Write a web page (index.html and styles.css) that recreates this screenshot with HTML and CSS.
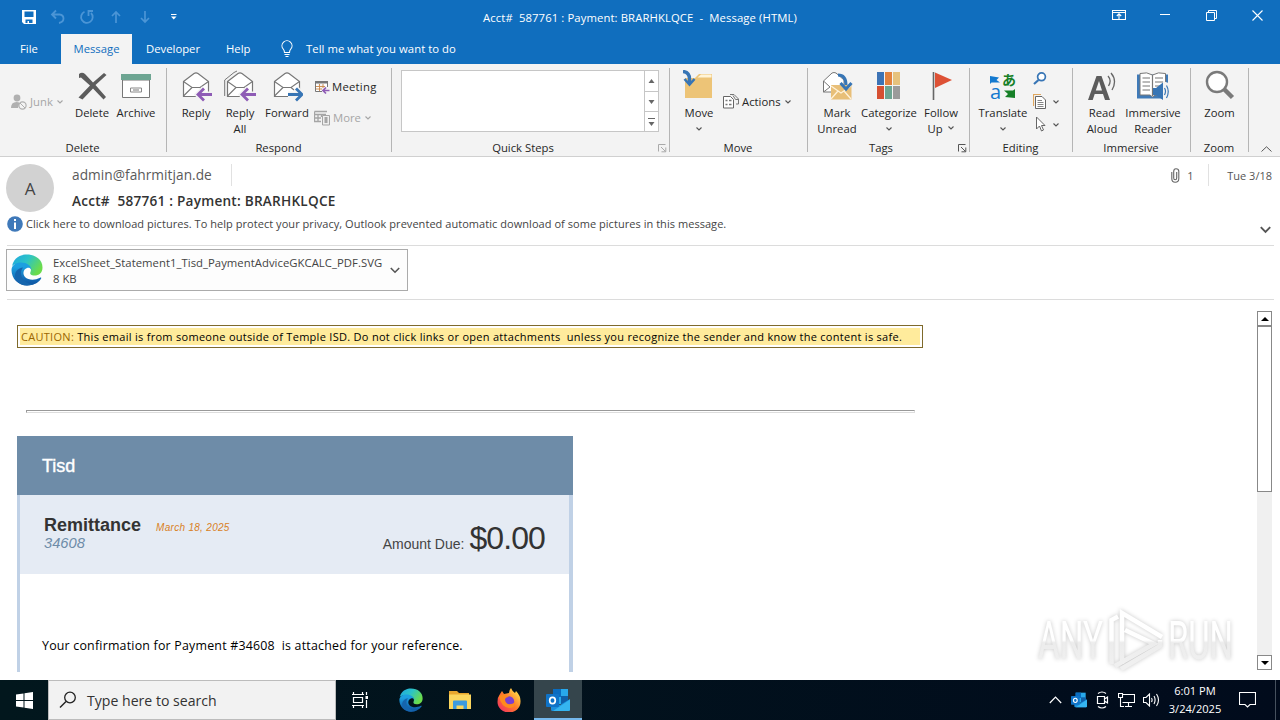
FILE: index.html
```
<!DOCTYPE html>
<html lang="en">
<head>
<meta charset="UTF-8" />
<title>Acct# 587761 : Payment: BRARHKLQCE - Message (HTML)</title>
<link rel="stylesheet" href="styles.css">
</head>
<body>

<svg class="defs" width="0" height="0">
  <symbol id="chev" viewBox="0 0 8 6"><path d="M1.500 1.500L4 4L6.500 1.500" fill="none" stroke="currentColor" stroke-width="1.100"/></symbol>
  <symbol id="envelope" viewBox="0 0 32 32">
    <path d="M3.500 11.500L14 3.500Q16 2.200 18 3.500L28.500 11.500V26.500H3.500Z" fill="#fff" stroke="#777" stroke-width="1.200"/>
    <path d="M3.500 11.500L12 17.500H20L28.500 11.500M12 17.500L3.500 26M20 17.500L23 20" fill="none" stroke="#777" stroke-width="1.100"/>
  </symbol>
  <symbol id="launcher" viewBox="0 0 9 9"><path d="M.5 7.500V.5H7.500M3 3L7.500 7.500M7.800 3.500V7.800H3.500" fill="none" stroke="currentColor"/></symbol>
  <symbol id="edge" viewBox="0 0 32 32">
    <path d="M1 12C3 4 9 .5 16 .5C25 .5 31.500 6 31.500 13.500C31.500 19 28 21.500 23.500 21.500C20 21.500 18.500 20 19.500 18C21 15 19 11 14 10.500C9 9 3 10 1 12Z" fill="url(#edgeGreen)"/>
    <path d="M.5 16C.5 11 5 8.500 10 8.500C16 8.500 20.500 12 20.500 16C19.500 13.800 17.500 13.500 16 14C12 15.500 11.500 20 14 23C17.500 26.500 24 26.500 29 23.800C30.200 23.200 30.600 24 30 24.800C27 29.500 22 31.500 16 31.500C7 31.500 .5 24.500 .5 16Z" fill="url(#edgeBlue)"/>
    <path d="M12 13.500C8 18 10 27 18 29.500C21 30.300 24 29.500 26 28.500C23 30.600 19.500 31.500 16 31.500C9 31.500 4 27 4 21C4.500 16.500 8 14 12 13.500Z" fill="#1565ad"/>
  </symbol>
  <symbol id="outlook" viewBox="0 0 24 24">
    <rect x="7" y="1" width="15" height="15" fill="#28a8ea"/>
    <rect x="7" y="1" width="8" height="8" fill="#0a6cbf"/>
    <rect x="15" y="8" width="7" height="8" fill="#0f5fa8"/>
    <path d="M5 12L14 17L24 11V21.500Q24 23 22.500 23H6.500Q5 23 5 21.500Z" fill="#1b8fdc"/>
    <path d="M24 11.500L7 23H22.500Q24 23 24 21.500Z" fill="#35b5f0"/>
    <rect x="0" y="6" width="13" height="13" rx="1" fill="#0f73c7"/>
    <ellipse cx="6.500" cy="12.500" rx="2.800" ry="3.200" fill="none" stroke="#fff" stroke-width="1.700"/>
  </symbol>
  <linearGradient id="edgeBlue" x1="0" y1="0" x2="0" y2="1"><stop offset=".2" stop-color="#1c9fe0"/><stop offset="1" stop-color="#0e4f9e"/></linearGradient>
  <linearGradient id="edgeGreen" x1="0" y1="0" x2="1" y2=".5"><stop offset="0" stop-color="#1fa6e0"/><stop offset=".5" stop-color="#2bc3c8"/><stop offset="1" stop-color="#6bdc4b"/></linearGradient>
  <linearGradient id="wmFade" gradientUnits="userSpaceOnUse" x1="0" y1="18" x2="0" y2="60"><stop offset=".48" stop-color="#fff"/><stop offset=".54" stop-color="#ececec"/><stop offset="1" stop-color="#f0f0f0"/></linearGradient>
</svg>

<div class="window">

  <header class="titlebar">
    <div class="quick-access">
      <svg width="16" height="16" viewBox="0 0 16 16"><path d="M1 1H15V15H3L1 13Z" fill="#fff"/><path d="M3.500 2.500H12.500V8H3.500ZM4.500 10.500H11.500V14H8V12H6.500V14H4.500Z" fill="#106ebe"/></svg>
      <svg class="faded" width="16" height="16" viewBox="0 0 16 16"><path d="M6 1.500L2 5.500L6 9.500M2 5.500H9.500Q13.500 6 13.500 9.500Q13.500 13 9 14" fill="none" stroke="currentColor" stroke-width="1.800"/></svg>
      <svg class="faded" width="16" height="16" viewBox="0 0 16 16"><path d="M5.500 2.800A5.800 5.800 0 1 0 12 4M14 2H9.500V7" fill="none" stroke="currentColor" stroke-width="1.800"/></svg>
      <svg class="faded" width="16" height="16" viewBox="0 0 16 16"><path d="M8 14V3M4 7L8 3L12 7" fill="none" stroke="currentColor" stroke-width="1.700"/></svg>
      <svg class="faded" width="16" height="16" viewBox="0 0 16 16"><path d="M8 2V13M4 9L8 13L12 9" fill="none" stroke="currentColor" stroke-width="1.700"/></svg>
      <svg width="16" height="16" viewBox="0 0 16 16"><path d="M5 5.500H10.500" stroke="#fff"/><path d="M5 7.500H10.500L7.750 10.500Z" fill="#fff"/></svg>
    </div>
    <div class="window-title">Acct#&nbsp; 587761 : Payment: BRARHKLQCE&nbsp; -&nbsp; Message (HTML)</div>
    <div class="window-controls">
      <span><svg width="14" height="12" viewBox="0 0 14 12"><path d="M.5 1.500H13.500V10.500H.5ZM.5 3.500H13.500M7 10V5M4.800 7L7 4.800L9.200 7" fill="none" stroke="#fff" stroke-width="1.100"/></svg></span>
      <span><svg width="11" height="11" viewBox="0 0 11 11"><path d="M0 4.500H10" stroke="#fff"/></svg></span>
      <span><svg width="11" height="11" viewBox="0 0 11 11"><path d="M.5 2.500H8.500V10.500H.5ZM2.500 2.500V.5H10.500V8.500H8.500" fill="none" stroke="#fff"/></svg></span>
      <span><svg width="11" height="11" viewBox="0 0 11 11"><path d="M.5.5L10.500 10.500M10.500.5L.5 10.500" stroke="#fff" stroke-width="1.100"/></svg></span>
    </div>
  </header>

  <nav class="tabs">
    <a class="tab file">File</a>
    <a class="tab active">Message</a>
    <a class="tab developer">Developer</a>
    <a class="tab help">Help</a>
    <svg class="bulb" width="12" height="18" viewBox="0 0 12 18"><path d="M3.500 12.500Q3.500 10.500 2.200 9A5 5 0 1 1 9.800 9Q8.500 10.500 8.500 12.500ZM3.500 14.500H8.500M4.500 16.500H7.500" fill="none" stroke="#fff" stroke-width="1.100"/></svg>
    <span class="tell-me">Tell me what you want to do</span>
  </nav>

  <section class="ribbon">
    <div class="group g-delete">
      <div class="tools">
        <div class="small-col junk-col">
          <div class="small disabled"><svg width="16" height="16" viewBox="0 0 16 16"><circle cx="6" cy="4" r="3.400" fill="#b0b0b0"/><path d="M0 14Q0 8 5.500 8Q8 8 8.500 9L7 14Z" fill="#b0b0b0"/><circle cx="11.500" cy="11.500" r="3.600" fill="#f3f3f3" stroke="#b0b0b0" stroke-width="1.200"/><path d="M9 9L14 14" stroke="#b0b0b0"/></svg><span>Junk</span><svg class="chev" width="8" height="6"><use href="#chev"/></svg></div>
        </div>
        <div class="big w40"><svg width="32" height="32" viewBox="0 0 32 32"><path d="M3 4Q6 1.500 9 4L17 12.500L28 3L30.500 5L19.500 15L30 27L27.500 29.500L17 18.500L6.500 29.500L2.500 27.500L14 15.500L5 7.500L3 8Z" fill="#5c5c5c"/></svg><span>Delete</span></div>
        <div class="big w48"><svg width="32" height="32" viewBox="0 0 32 32"><path d="M2.500 10H29.500V27.500H2.500Z" fill="#fff" stroke="#777"/><path d="M1 4H31V10H1Z" fill="#6da592"/><path d="M10.500 18H21.500V22H10.500Z" fill="#fff" stroke="#888"/><path d="M13 20H19" stroke="#777"/></svg><span>Archive</span></div>
      </div>
      <div class="group-name">Delete</div>
    </div>

    <div class="group g-respond">
      <div class="tools">
        <div class="big w44"><svg width="32" height="32" viewBox="0 0 32 32"><use href="#envelope" width="32" height="32"/><path d="M32 24.500H19M24 18.500L18 24.500L24 30.500" fill="none" stroke="#f3f3f3" stroke-width="6"/><path d="M32 24.500H18M24 18.500L18 24.500L24 30.500" fill="none" stroke="#8e5bb5" stroke-width="2.800"/></svg><span>Reply</span></div>
        <div class="big w44"><svg width="32" height="32" viewBox="0 0 32 32"><path d="M.7 26V10L10 2.500L13 1" fill="none" stroke="#777"/><use href="#envelope" width="32" height="32"/><path d="M32 24.500H19M24 18.500L18 24.500L24 30.500" fill="none" stroke="#f3f3f3" stroke-width="6"/><path d="M32 24.500H18M24 18.500L18 24.500L24 30.500" fill="none" stroke="#8e5bb5" stroke-width="2.800"/></svg><span>Reply<br>All</span></div>
        <div class="big w50"><svg width="32" height="32" viewBox="0 0 32 32"><use href="#envelope" width="32" height="32"/><path d="M17 24.500H30M25 18.500L31 24.500L25 30.500" fill="none" stroke="#f3f3f3" stroke-width="6"/><path d="M17 24.500H31M25 18.500L31 24.500L25 30.500" fill="none" stroke="#3775b5" stroke-width="2.800"/></svg><span>Forward</span></div>
        <div class="small-col respond-col">
          <div class="small"><svg width="16" height="16" viewBox="0 0 16 16"><path d="M1.500 2.500H13.500V8M1.500 2.500V12.500H8" fill="#fff" stroke="#777"/><path d="M1 2H14V4.500H1Z" fill="#777"/><path d="M5.500 5V12M9 5V9M2 7.500H11M2 10H8" stroke="#c98748" stroke-width=".9"/><path d="M15.500 11.500H9.500M12 8.500L9 11.500L12 14.500" fill="none" stroke="#8e5bb5" stroke-width="1.700"/></svg><span class="meeting">Meeting</span></div>
          <div class="small disabled"><svg width="16" height="16" viewBox="0 0 16 16"><path d="M.5 1.500H13M.5 1.500V11.500H7M.5 4.500H12M4 4V11M7.500 4V7M1 8H7" fill="none" stroke="#a5a5a5" stroke-width="1.300"/><path d="M8.500 5.500H15.500V15H8.500Z" fill="#eee" stroke="#a5a5a5"/><path d="M10.500 7H13.500V13H10.500Z" fill="#a5a5a5"/></svg><span>More</span><svg class="chev" width="8" height="6"><use href="#chev"/></svg></div>
        </div>
      </div>
      <div class="group-name">Respond</div>
    </div>

    <div class="group g-quick">
      <div class="tools">
        <div class="gallery">
          <div class="gallery-list"></div>
          <div class="gallery-scroll">
            <span><svg width="7" height="4"><path d="M.5 4L3.500 0L6.500 4Z" fill="#666"/></svg></span>
            <span><svg width="7" height="4"><path d="M.5 0L3.500 4L6.500 0Z" fill="#666"/></svg></span>
            <span><svg width="7" height="8"><path d="M0 .5H7" stroke="#666"/><path d="M.5 4L3.500 8L6.500 4Z" fill="#666"/></svg></span>
          </div>
        </div>
      </div>
      <div class="group-name"><span>Quick Steps</span><svg class="launcher light" width="9" height="9"><use href="#launcher"/></svg></div>
    </div>

    <div class="group g-move">
      <div class="tools">
        <div class="big w44"><svg width="32" height="32" viewBox="0 0 32 32"><path d="M2 8H12L16 4H29V28H2Z" fill="#edc477"/><path d="M14.500 7.500L18 4.500H28.500V7.500Z" fill="#fff4d8"/><path d="M0 1.500Q6.500 2 6.500 9V13" fill="none" stroke="#3775b5" stroke-width="3.400"/><path d="M1.500 9L6.500 14.500L11.500 9" fill="none" stroke="#3775b5" stroke-width="2.600"/></svg><span>Move<br><svg class="chev" width="8" height="6"><use href="#chev"/></svg></span></div>
        <div class="small-col move-col">
          <div class="small"><svg width="16" height="16" viewBox="0 0 16 16"><path d="M.5 2.500H7.500L10.500 5.500V14H.5Z" fill="#fff" stroke="#666"/><path d="M2.500 6.500H4.500M2.500 10.500H4.500M6 6.500H8.500M6 10.500H8.500" stroke="#777" stroke-width="1.400"/><path d="M7 .5H11L15.500 5V10H13M10 1.500L12.500 5.500H15" fill="none" stroke="#777"/></svg><span>Actions</span><svg class="chev" width="8" height="6"><use href="#chev"/></svg></div>
        </div>
      </div>
      <div class="group-name">Move</div>
    </div>

    <div class="group g-tags">
      <div class="tools">
        <div class="big w46"><svg width="32" height="32" viewBox="0 0 32 32"><path d="M2.500 11L11 3Q13 2 15 3L23 10V22H2.500Z" fill="#fff" stroke="#777"/><path d="M2.500 11L9 17M2.500 22L9 17" stroke="#777"/><path d="M10 15H30.500V29.500H10Z" fill="#e8bf78"/><path d="M10 16L20 23L30 16M10 29L17 21M30 29L23 21" fill="none" stroke="#fff2d9" stroke-width="1.300"/><path d="M17 5Q25 5 25 15M19.500 13L25 19L30.500 13" fill="none" stroke="#3775b5" stroke-width="3"/></svg><span>Mark<br>Unread</span></div>
        <div class="big w58"><svg width="32" height="32" viewBox="0 0 32 32"><path d="M4 2H11V15H4Z" fill="#3c73b5"/><path d="M12 2H19V15H12Z" fill="#e2823e"/><path d="M20 2H27V15H20Z" fill="#e6c27d"/><path d="M4 16H11V29H4Z" fill="#d65032"/><path d="M12 16H19V29H12Z" fill="#6da592"/><path d="M20 16H27V29H20Z" fill="#9b9b9b"/></svg><span>Categorize<br><svg class="chev" width="8" height="6"><use href="#chev"/></svg></span></div>
        <div class="big w46"><svg width="32" height="32" viewBox="0 0 32 32"><path d="M8.500 2V30" stroke="#666" stroke-width="1.600"/><path d="M10 2.500L27 10L10 18Z" fill="#dd5135"/></svg><span>Follow<br>Up <svg class="chev up" width="8" height="6"><use href="#chev"/></svg></span></div>
      </div>
      <div class="group-name"><span>Tags</span><svg class="launcher" width="9" height="9"><use href="#launcher"/></svg></div>
    </div>

    <div class="group g-editing">
      <div class="tools">
        <div class="big w50"><svg class="translate" width="32" height="32" viewBox="0 0 32 32"><path d="M3 6L12 7.500L9.500 10L13 12.500H4.500L3 14Z" fill="#1379cf"/><path d="M28 28L18 27L21 24L17 20.500H26L28 19Z" fill="#168028"/><text x="15" y="15" class="kana">あ</text><text x="3" y="29" class="latin">a</text></svg><span>Translate<br><svg class="chev" width="8" height="6"><use href="#chev"/></svg></span></div>
        <div class="edit-col">
          <div><svg width="16" height="14" viewBox="0 0 16 14"><circle cx="8.500" cy="4.800" r="3.900" fill="#fff" stroke="#3775b5" stroke-width="1.700"/><path d="M5.500 8L1 12" stroke="#3775b5" stroke-width="2.200"/></svg></div>
          <div><svg width="16" height="17" viewBox="0 0 16 17"><path d="M.5 13V1.500H8" fill="none" stroke="#e0a75e" stroke-width="1.200"/><path d="M2.500 3.500H9L12.500 7V15.500H2.500Z" fill="#fff" stroke="#666"/><path d="M4.500 7.500H9M4.500 9.500H10.500M4.500 11.500H10.500M4.500 13.500H10.500" stroke="#777" stroke-width=".9"/></svg><svg class="chev" width="8" height="6"><use href="#chev"/></svg></div>
          <div><svg width="16" height="16" viewBox="0 0 16 16"><path d="M3.500 0V12L6.500 9L8.500 14L10.500 13L8.500 8.500H12Z" fill="#fff" stroke="#666"/></svg><svg class="chev" width="8" height="6"><use href="#chev"/></svg></div>
        </div>
      </div>
      <div class="group-name">Editing</div>
    </div>

    <div class="group g-immersive">
      <div class="tools">
        <div class="big w44"><svg width="32" height="32" viewBox="0 0 32 32"><path fill-rule="evenodd" d="M2 30L10.500 6H15.500L24 30H19L17 24H8.700L6.700 30ZM9.800 20.500H16L13 11Z" fill="#5c5c5c"/><path d="M22 6Q26 10.500 22.500 16M25 3Q31.500 10.500 26 20" fill="none" stroke="#666" stroke-width="1.300"/></svg><span>Read<br>Aloud</span></div>
        <div class="big w58"><svg width="32" height="32" viewBox="0 0 32 32"><path d="M0 4.500H31V28.500H0Z" fill="#3f7ab8"/><path d="M3 3.500Q10 1.500 15.500 5Q21 1.500 28.500 3.500V25H18L15.500 27L13 25H3Z" fill="#fff" stroke="#777"/><path d="M15.500 5V26M5.500 8H13M5.500 12H13M5.500 16H13M5.500 20H13M18 8H26M18 12H26M18 16H23" stroke="#777" stroke-width="1.200"/><path d="M26 11L31.500 13V30H26Z" fill="#f3f3f3"/><path d="M16 18H19L26 12.500V30L19 25H16Z" fill="#3775b5"/><path d="M27.500 18Q29.500 21 27.500 25M29.500 15.500Q33 21.500 29.500 28" fill="none" stroke="#3775b5" stroke-width="1.200"/></svg><span>Immersive<br>Reader</span></div>
      </div>
      <div class="group-name">Immersive</div>
    </div>

    <div class="group g-zoom">
      <div class="tools">
        <div class="big w56"><svg width="32" height="32" viewBox="0 0 32 32"><circle cx="13" cy="12" r="10" fill="#fff" stroke="#7a7a7a" stroke-width="2.400"/><path d="M20 19L28.500 27.500" stroke="#7a7a7a" stroke-width="4.500"/></svg><span>Zoom</span></div>
      </div>
      <div class="group-name">Zoom</div>
    </div>
    <svg class="collapse" width="11" height="6" viewBox="0 0 11 6"><path d="M.5 5.500L5.500.8L10.500 5.500" fill="none" stroke="#555"/></svg>
  </section>

  <section class="message-head">
    <div class="sender-row">
      <div class="avatar">A</div>
      <div class="who">
        <div class="from"><span>admin@fahrmitjan.de</span></div>
        <div class="subject">Acct#&nbsp; 587761 : Payment: BRARHKLQCE</div>
      </div>
      <div class="meta">
        <svg width="9" height="15" viewBox="0 0 9 15"><path d="M.8 4V10.500Q.8 14.300 4.200 14.300Q7.800 14.300 7.800 10.500V3.500Q7.800.7 5 .7Q2.700.7 2.700 3.500V10Q2.700 11.800 4.200 11.800Q5.700 11.800 5.700 10V4" fill="none" stroke="#666" stroke-width="1.100"/></svg>
        <span class="count">1</span>
        <span class="date">Tue 3/18</span>
      </div>
    </div>
    <div class="info-bar">
      <svg width="16" height="16" viewBox="0 0 16 16"><circle cx="8" cy="8" r="7.800" fill="#3f79b9"/><path d="M8 3V5M8 6.500V13" stroke="#fff" stroke-width="2"/></svg>
      <span>Click here to download pictures. To help protect your privacy, Outlook prevented automatic download of some pictures in this message.</span>
      <svg class="expand" width="11" height="8" viewBox="0 0 11 8"><path d="M.8 1.200L5.500 6L10.200 1.200" fill="none" stroke="#555" stroke-width="1.900"/></svg>
    </div>
  </section>

  <section class="attachments">
    <div class="attachment">
      <svg width="32" height="32"><use href="#edge"/></svg>
      <div class="file-info">
        <div class="file-name">ExcelSheet_Statement1_Tisd_PaymentAdviceGKCALC_PDF.SVG</div>
        <div class="file-size">8 KB</div>
      </div>
      <svg width="10" height="7" viewBox="0 0 10 7"><path d="M.8 1L5 5.200L9.200 1" fill="none" stroke="#555" stroke-width="1.600"/></svg>
    </div>
  </section>

  <main class="reading-pane">
    <div class="mail-body">
      <div class="caution"><p><span class="caution-word">CAUTION:</span> This email is from someone outside of Temple ISD. Do not click links or open attachments&nbsp; unless you recognize the sender and know the content is safe.</p></div>
      <hr class="rule">
      <div class="card">
        <div class="card-title">Tisd</div>
        <div class="card-inner">
          <div class="summary">
            <div>
              <div class="remit"><b>Remittance</b><i>March 18, 2025</i></div>
              <div class="number">34608</div>
            </div>
            <div class="due"><span>Amount Due:</span><strong>$0.00</strong></div>
          </div>
          <p class="note">Your confirmation for Payment #34608&nbsp; is attached for your reference.</p>
        </div>
      </div>
    </div>
    <div class="scrollbar">
      <div class="scroll-btn"><svg width="8" height="4"><path d="M0 4L4 0L8 4Z" fill="#000"/></svg></div>
      <div class="thumb"></div>
      <div class="scroll-btn down"><svg width="8" height="4"><path d="M0 0L4 4L8 0Z" fill="#000"/></svg></div>
    </div>
  </main>

  <svg class="watermark" width="214" height="76" viewBox="0 0 214 76">
    <g class="wm-text">
      <text x="8" y="57" textLength="65" lengthAdjust="spacingAndGlyphs">ANY</text>
      <text x="138" y="57" textLength="65" lengthAdjust="spacingAndGlyphs">RUN</text>
    </g>
    <path d="M81.500 62V18L88 14.500M92 62V11L132 35M95 28L124 42L85 64M91 67L130 44V38" fill="none" stroke="url(#wmFade)" stroke-width="4.500"/>
  </svg>

  <footer class="taskbar">
    <div class="start"><svg width="17" height="17" viewBox="0 0 17 17"><path d="M0 2.500L7.500 1.500V8H0ZM8.500 1.300L17 0V8H8.500ZM0 9H7.500V15.500L0 14.500ZM8.500 9H17V17L8.500 15.700Z" fill="#fff"/></svg></div>
    <div class="search"><svg width="18" height="18" viewBox="0 0 18 18"><circle cx="11" cy="6.500" r="5.300" fill="none" stroke="#222" stroke-width="1.300"/><path d="M7 10.500L1 16.500" stroke="#222" stroke-width="1.400"/></svg><span>Type here to search</span></div>
    <div class="app task-view"><svg width="16" height="16" viewBox="0 0 16 16"><path d="M0 2.500H12M1.500 5.500H10.500V10.500H1.500ZM0 13.500H12M1.500 0V2.500M10.500 0V2.500M1.500 13.500V16M10.500 13.500V16M14.500 0V3M14.500 8V16" fill="none" stroke="#fff" stroke-width="1.200"/><path d="M13.500 4H16V7H13.500Z" fill="#fff"/></svg></div>
    <div class="app edge-app"><svg width="24" height="24"><use href="#edge"/></svg></div>
    <div class="app"><svg width="22" height="20" viewBox="0 0 22 20"><path d="M0 1H8L10 3H20V7H0Z" fill="#e8a72e"/><path d="M0 4.500H22V19H0Z" fill="#fbd65e"/><path d="M4 11.500Q4 10.500 5 10.500H17Q18 10.500 18 11.500V19H14.500V15.500H7.500V19H4Z" fill="#3d9be0"/></svg></div>
    <div class="app"><svg width="24" height="24" viewBox="0 0 24 24"><path d="M3 6L5 3L7 6L12 5Q12 2 14 0Q15 3 18 5L19 3Q24 8 23.500 14A11.500 10.500 0 0 1 .5 14Q.5 9 3 6Z" fill="url(#fox)"/><circle cx="12" cy="13.500" r="5.200" fill="#7b3fd0"/><path d="M2 8Q8 5 12 9Q8 9 8 12Q9 17 14 16Q17 16 18 13Q19 20 12 20Q4 19 2 8Z" fill="#ff8a1d"/><defs><linearGradient id="fox" x1="1" y1="0" x2="0" y2="1"><stop offset=".1" stop-color="#ffe14a"/><stop offset=".5" stop-color="#ff7a2a"/><stop offset="1" stop-color="#f0246a"/></linearGradient></defs></svg></div>
    <div class="app current"><svg width="24" height="24"><use href="#outlook"/></svg></div>
    <div class="tray">
      <svg width="13" height="8" viewBox="0 0 13 8"><path d="M.8 7L6.500 1.200L12.200 7" fill="none" stroke="#fff" stroke-width="1.200"/></svg>
      <svg width="16" height="16"><use href="#outlook"/></svg>
      <svg width="14" height="18" viewBox="0 0 14 18"><path d="M2.500 5.500H9.500V12.500H2.500ZM9.500 8L12.500 6V12L9.500 10M3 2.500Q7-.5 11 2.500M3 15.500Q7 18.500 11 15.500" fill="none" stroke="#fff" stroke-width="1.200"/></svg>
      <svg width="17" height="16" viewBox="0 0 17 16"><path d="M5 2.500H16.500V10.500H4.500M10.500 10.500V14.500M7 14.500H14M.5 1.500H4.500V5.500H.5ZM2.500 5.500V14.500H6" fill="none" stroke="#fff" stroke-width="1.100"/></svg>
      <svg width="17" height="14" viewBox="0 0 17 14"><path d="M.5 4.500H3L6.500 1V13L3 9.500H.5ZM8.500 5Q9.700 7 8.500 9M11 3Q13.200 7 11 11M13.500 1Q17.500 7 13.500 13" fill="none" stroke="#fff" stroke-width="1.100"/></svg>
    </div>
    <div class="clock"><span class="time">6:01 PM</span><span class="day">3/24/2025</span></div>
    <div class="notify"><svg width="17" height="16" viewBox="0 0 17 16"><path d="M.5.5H16.500V12.500H11L8.500 15L6 12.500H.5Z" fill="none" stroke="#fff" stroke-width="1.100"/></svg></div>
  </footer>
</div>

</body>
</html>
```
FILE: styles.css
```
* {
  box-sizing: border-box;
}
body {
  margin: 0;
  font-family: 'Open Sans', 'Noto Sans', sans-serif;
  font-size: 11.3px;
  color: #262626;
  background: #fff;
}
svg {
  display: block;
  flex: none;
}
.defs {
  position: absolute;
}
.window {
  position: relative;
  width: 1280px;
  height: 720px;
  overflow: hidden;
  display: flex;
  flex-direction: column;
  white-space: nowrap;
}

/* Title bar */
.titlebar {
  height: 34px;
  flex: none;
  background: #106ebe;
  color: #fff;
  display: grid;
  grid-template-columns: 300px 1fr 300px;
}
.quick-access {
  display: flex;
  gap: 13px;
  padding: 9px 0 0 21px;
}
.faded {
  color: #4b95d6;
}
.window-title {
  text-align: center;
  line-height: 35px;
  letter-spacing: 0.1px;
}
.window-controls {
  display: flex;
  justify-content: flex-end;
}
.window-controls span {
  width: 46px;
  height: 30px;
  display: flex;
  align-items: center;
  justify-content: center;
}

/* Tabs */
.tabs {
  height: 30px;
  flex: none;
  background: #106ebe;
  color: #fff;
  display: flex;
  align-items: center;
  line-height: 30px;
}
.tab {
  height: 30px;
}
.file {
  width: 61px;
  padding-left: 20px;
}
.active {
  width: 71px;
  background: #f3f3f3;
  color: #106ebe;
  text-align: center;
}
.developer {
  width: 94px;
  padding-left: 14px;
}
.help {
  width: 55px;
}
.bulb {
  margin: 0 13px 0 0;
}
.tell-me {
  letter-spacing: 0.05px;
}

/* Ribbon */
.ribbon {
  height: 93px;
  flex: none;
  display: flex;
  background: #f3f3f3;
  border-bottom: 1px solid #d0d0d0;
  line-height: 16px;
}
.group {
  height: 92px;
  display: flex;
  flex-direction: column;
  background: linear-gradient(#b5b5b5, #b5b5b5) no-repeat right 4px / 1px 84px;
}
.tools {
  height: 76px;
  display: flex;
  padding-top: 6px;
}
.g-delete { width: 167px; }
.g-respond { width: 225px; }
.g-quick { width: 278px; }
.g-move { width: 138px; }
.g-tags { width: 162px; }
.g-editing { width: 103px; }
.g-immersive { width: 118px; }
.g-zoom { width: 58px; }
.g-respond .tools { padding-left: 7px; }
.g-move .tools { padding-left: 7px; }
.g-tags .tools { padding-left: 6px; }
.g-editing .tools { padding-left: 8px; }
.g-immersive .tools { padding-left: 7px; }
.group-name {
  height: 16px;
  display: flex;
  justify-content: center;
  padding-right: 2px;
}
.group-name span {
  flex: 1;
  margin-left: -5px;
  text-align: center;
}
.launcher {
  color: #555;
  margin: 4px 1px 0 -1px;
}
.light {
  color: #aaa;
}
.big {
  display: flex;
  flex-direction: column;
  align-items: center;
  gap: 3px;
  text-align: center;
}
.big .chev {
  margin: 5px auto 0;
}
.big .chev.up {
  display: inline-block;
  margin: 0 0 2px 1px;
}
.w40 { width: 40px; }
.w44 { width: 44px; }
.w46 { width: 46px; }
.w48 { width: 48px; }
.w50 { width: 50px; }
.w56 { width: 57px; }
.w58 { width: 58px; }
.chev {
  color: #555;
}
.small-col {
  display: flex;
  flex-direction: column;
}
.small {
  display: flex;
  align-items: center;
  height: 16px;
}
.small span {
  margin: 0 3px;
}
.small .meeting {
  margin-left: 2px;
  letter-spacing: 0.25px;
}
.disabled,
.disabled .chev {
  color: #a6a6a6;
}
.junk-col {
  width: 72px;
  padding: 24px 0 0 11px;
}
.respond-col {
  padding: 9px 0 0 2px;
  gap: 15px;
}
.move-col {
  padding: 24px 0 0 2px;
}
.gallery {
  display: flex;
  width: 258px;
  height: 62px;
  margin-left: 9px;
  background: #fff;
  border: 1px solid #c6c6c6;
}
.gallery-list {
  flex: 1;
}
.gallery-scroll {
  width: 14px;
  border-left: 1px solid #c6c6c6;
  display: grid;
  grid-template-rows: repeat(3, 1fr);
}
.gallery-scroll span {
  display: flex;
  align-items: center;
  justify-content: center;
}
.gallery-scroll span + span {
  border-top: 1px solid #c6c6c6;
}
.translate {
  overflow: visible;
}
.kana {
  font: bold 14px 'Noto Sans CJK JP', sans-serif;
  fill: #168028;
}
.latin {
  font: 20px 'Open Sans', sans-serif;
  fill: #1379cf;
}
.edit-col {
  display: flex;
  flex-direction: column;
  gap: 7px;
  padding: 2px 0 0 5px;
}
.edit-col div {
  display: flex;
  align-items: center;
  gap: 3px;
}
.collapse {
  margin: 82px 0 0 12px;
}

/* Message header */
.message-head {
  height: 89px;
  flex: none;
  margin: 0 6px 0 7px;
  border-bottom: 1px solid #dcdcdc;
}
.sender-row {
  display: flex;
  height: 57px;
  padding-top: 7px;
}
.avatar {
  width: 48px;
  height: 48px;
  margin-left: -1px;
  border-radius: 50%;
  background: #d2d2d2;
  color: #444;
  font-size: 17px;
  line-height: 49px;
  text-align: center;
}
.who {
  flex: 1;
  padding-left: 18px;
}
.from {
  height: 22px;
  display: flex;
  line-height: 22px;
  font-size: 13.7px;
  color: #5a5a5a;
}
.from span {
  width: 160px;
  letter-spacing: 0.04px;
  border-right: 1px solid #e1e1e1;
}
.subject {
  line-height: 30px;
  font-size: 13.6px;
  font-weight: 600;
  letter-spacing: 0.24px;
  color: #333;
}
.meta {
  display: flex;
  height: 22px;
  align-items: center;
  color: #555;
  font-size: 11px;
}
.count {
  width: 21px;
  margin-left: 7px;
}
.date {
  height: 22px;
  line-height: 24px;
  border-left: 1px solid #e1e1e1;
  padding: 0 2px 0 18px;
}
.info-bar {
  display: flex;
  align-items: center;
  height: 20px;
  font-size: 11px;
  color: #444;
}
.info-bar span {
  margin-left: 3px;
  line-height: 20px;
  letter-spacing: 0.046px;
}
.info-bar span {
  height: 21px;
}
.expand {
  margin: 12px 3px 0 auto;
}

/* Attachment */
.attachments {
  height: 54px;
  flex: none;
  margin: 0 6px 0 7px;
  padding-top: 3px;
  border-bottom: 1px solid #dcdcdc;
}
.attachment {
  display: flex;
  align-items: center;
  width: 402px;
  height: 42px;
  margin-left: -1px;
  padding: 0 7px 0 4px;
  border: 1px solid #ababab;
  background: #fdfdfd;
}
.file-info {
  flex: 1;
  padding: 1px 0 0 10px;
  line-height: 16px;
  color: #444;
}
.file-name {
  letter-spacing: 0.04px;
}

/* Reading pane */
.reading-pane {
  height: 372px;
  flex: none;
  display: flex;
  justify-content: space-between;
  margin-bottom: 8px;
  overflow: hidden;
}
.mail-body {
  padding: 25px 0 0 17px;
}
.caution {
  width: 906px;
  height: 23px;
  padding: 2px;
  border: 1px solid #7f6a2b;
}
.caution p {
  margin: 0;
  padding-left: 1px;
  height: 17px;
  line-height: 18px;
  font-size: 11px;
  letter-spacing: 0.288px;
  color: #000;
  background: #ffeb9c;
}
.caution-word {
  color: #9c6500;
}
.rule {
  width: 889px;
  height: 3px;
  margin: 62px 0 23px 9px;
  border: 1px solid #999;
  border-right-color: #ddd;
  border-bottom-color: #ddd;
}
.card {
  width: 556px;
  font-family: 'Liberation Sans', Arial, sans-serif;
}
.card-title {
  height: 59px;
  padding-left: 25px;
  line-height: 60px;
  font-size: 18px;
  color: #fff;
  -webkit-text-stroke: 0.4px #fff;
  background: #6e8ca8;
}
.card-inner {
  height: 200px;
  border: solid #c0d1e6;
  border-width: 0 4px 0 3px;
}
.summary {
  display: flex;
  justify-content: space-between;
  height: 79px;
  padding: 19px 24px 0;
  background: #e5ebf4;
}
.remit {
  display: flex;
  align-items: baseline;
  gap: 15px;
  height: 20px;
  margin-top: 1px;
  color: #333;
  font-size: 18px;
}
.remit i {
  font-size: 10px;
  letter-spacing: 0.3px;
  color: #d97f1e;
}
.number {
  font-size: 14.7px;
  font-style: italic;
  color: #6e8ca8;
}
.due {
  display: flex;
  align-items: baseline;
  gap: 5px;
  padding-top: 6px;
  font-size: 14px;
  color: #444;
}
.due strong {
  font-size: 32px;
  line-height: 36px;
  font-weight: 400;
  letter-spacing: -0.9px;
  color: #333;
}
.note {
  margin: 62px 0 0 22px;
  font: 12.4px/20px 'Open Sans', 'Noto Sans', sans-serif;
  letter-spacing: 0.21px;
  color: #000;
}
.scrollbar {
  width: 15px;
  height: 359px;
  margin: 11px 8px 0 0;
  display: flex;
  flex-direction: column;
  background: #f0f0f0;
}
.scroll-btn {
  height: 15px;
  display: flex;
  align-items: center;
  justify-content: center;
  background: #fff;
  border: 1px solid #888;
}
.thumb {
  height: 166px;
  background: #fff;
  border: 1px solid #888;
}
.down {
  margin-top: auto;
}

/* Watermark over the mail */
.watermark {
  position: absolute;
  left: 1030px;
  top: 602px;
  overflow: visible;
  filter: drop-shadow(0 0 2px rgba(0, 0, 0, 0.22));
}
.wm-text text {
  font: 400 53px Roboto, sans-serif;
  fill: url(#wmFade);
}

/* Taskbar */
.taskbar {
  height: 40px;
  flex: none;
  display: flex;
  background: linear-gradient(90deg, #02171d, #010b1c);
  color: #fff;
}
.start,
.app {
  width: 48px;
  display: flex;
  align-items: center;
  justify-content: center;
}
.search {
  display: flex;
  align-items: center;
  width: 288px;
  padding-left: 10px;
  gap: 10px;
  background: #f2f2f2;
  border: 1px solid #bcbcbc;
  color: #333;
  font-size: 14.1px;
}
.app {
  width: 49px;
}
.task-view {
  width: 48px;
}
.edge-app {
  width: 51px;
  padding-left: 2px;
}
.current {
  width: 48px;
  margin-left: 1px;
  background: #35454c;
  border-bottom: 2px solid #76b9ed;
  padding-top: 2px;
}
.tray {
  display: flex;
  align-items: center;
  gap: 8.5px;
  margin-left: auto;
}
.clock {
  width: 70px;
  display: flex;
  flex-direction: column;
  align-items: center;
  justify-content: center;
  line-height: 18px;
  padding-bottom: 1px;
}
.clock span {
  font-size: 11.1px;
}
.notify {
  width: 46px;
  margin-right: 4px;
  padding-right: 10px;
  border-right: 1px solid #46515e;
  display: flex;
  align-items: center;
  justify-content: center;
}
```
